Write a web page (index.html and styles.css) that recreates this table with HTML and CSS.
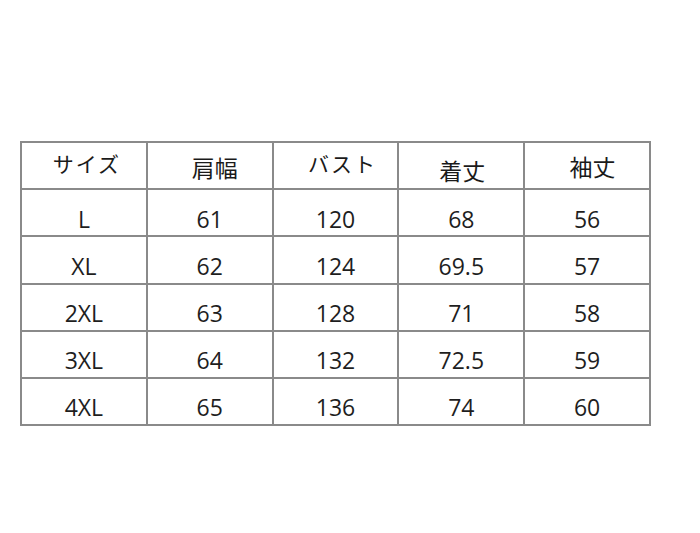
FILE: index.html
```html
<!DOCTYPE html>
<html lang="ja">
<head>
<meta charset="utf-8">
<link rel="stylesheet" href="styles.css">
</head>
<body>
<div class="sheet">
  <div class="grid">
    <div class="cell head h1"><span class="kana">サイズ</span></div>
    <div class="cell head h2">肩幅</div>
    <div class="cell head h3"><span class="kana">バスト</span></div>
    <div class="cell head h4">着丈</div>
    <div class="cell head h5">袖丈</div>

    <div class="cell">L</div><div class="cell">61</div><div class="cell">120</div><div class="cell">68</div><div class="cell">56</div>
    <div class="cell">XL</div><div class="cell">62</div><div class="cell">124</div><div class="cell">69.5</div><div class="cell">57</div>
    <div class="cell">2XL</div><div class="cell">63</div><div class="cell">128</div><div class="cell">71</div><div class="cell">58</div>
    <div class="cell">3XL</div><div class="cell">64</div><div class="cell">132</div><div class="cell">72.5</div><div class="cell">59</div>
    <div class="cell">4XL</div><div class="cell">65</div><div class="cell">136</div><div class="cell">74</div><div class="cell">60</div>
  </div>
</div>
</body>
</html>
```
FILE: styles.css
```css
html, body {
  margin: 0;
  padding: 0;
  background: #ffffff;
}

.sheet {
  width: 700px;
  height: 533px;
  padding: 141px 0 0 20px;
  box-sizing: border-box;
}

.grid {
  display: grid;
  grid-template-columns: repeat(5, 1fr);
  grid-template-rows: repeat(6, 1fr);
  width: 631px;
  height: 285px;
  box-sizing: border-box;
  border-top: 2px solid #8a8a8a;
  border-left: 2px solid #8a8a8a;
}

.cell {
  display: flex;
  align-items: center;
  justify-content: center;
  border-right: 2px solid #8a8a8a;
  border-bottom: 2px solid #8a8a8a;
  padding-top: 13px;
  font-family: "Open Sans", "Noto Sans", sans-serif;
  font-size: 23px;
  color: #1e1e1e;
  line-height: 1;
}

.head {
  font-family: "Noto Sans CJK JP", sans-serif;
  font-size: 23px;
  font-weight: 400;
  color: #1a1a1a;
  padding-top: 0;
}

.kana {
  letter-spacing: 2px;
  font-size: 21px;
}

.h1 { padding-left: 6px; padding-bottom: 4px; }
.h2 { padding-left: 10px; padding-top: 4px; }
.h3 { padding-left: 14px; padding-bottom: 4px; }
.h4 { padding-left: 2px; padding-top: 9px; }
.h5 { padding-left: 11px; padding-top: 1px; }
```
